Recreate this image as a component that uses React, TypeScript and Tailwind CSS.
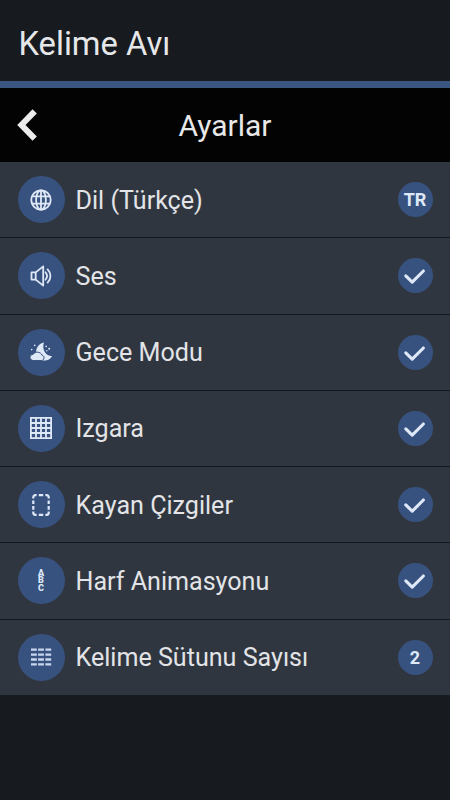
import type { ReactNode } from 'react';

const ICON_COLOR = '#dfe8f7';

function GlobeIcon() {
  return (
    <svg width="24" height="24" viewBox="0 0 24 24" fill="none" stroke={ICON_COLOR} strokeWidth="1.8">
      <circle cx="12" cy="12" r="9.7" />
      <ellipse cx="12" cy="12" rx="4.9" ry="9.7" />
      <path d="M12 2v20M3 8.4h18M3 15.6h18" />
    </svg>
  );
}

function SoundIcon() {
  return (
    <svg width="24" height="24" viewBox="0 0 24 24" fill="none" stroke={ICON_COLOR} strokeWidth="1.8" strokeLinejoin="round">
      <path d="M2.5 8.4h4.2v7.2H2.5z" />
      <path d="M6.7 8.4L14.2 2.4v19.2l-7.5-6" />
      <path d="M16.5 8.2c1.8 2.2 1.8 5.4 0 7.6M18.6 5.4c3.8 3.8 3.8 9.4 0 13.2" strokeLinecap="round" />
    </svg>
  );
}

function NightIcon() {
  return (
    <svg width="24" height="24" viewBox="0 0 24 24" fill={ICON_COLOR}>
      <path d="M14.9 2.6C10 3.6 7.2 7.6 7.2 12c0 5 3.8 8.6 8.3 8.6 3.3 0 6.2-1.700 7.600-4.400-6.400 0-10.400-6.400-8.200-13.600z" />
      <path
        d="M5 20.600c-5.200 0-5.200-6-.8-6.300 1.700-3.200 7.600-2.700 8.700.8 3.300.6 2.600 5.500-.7 5.500z"
        stroke="#38527f"
        strokeWidth="1"
      />
      <circle cx="5.700" cy="5.400" r=".8" />
      <circle cx="2.700" cy="9.600" r=".8" />
      <circle cx="17.200" cy="6.400" r=".8" />
      <circle cx="20.200" cy="8.800" r="1" />
      <circle cx="17.800" cy="10.800" r=".7" />
    </svg>
  );
}

function GridIcon() {
  return (
    <svg width="24" height="24" viewBox="0 0 24 24" fill="none" stroke={ICON_COLOR} strokeWidth="1.8">
      <path d="M1.9 1.9h20.2v20.2H1.9zM7 1.9v20.2M12 1.9v20.2M17 1.9v20.2M1.9 7h20.2M1.9 12h20.2M1.9 17h20.2" />
    </svg>
  );
}

function DashedIcon() {
  return (
    <svg width="24" height="24" viewBox="0 0 24 24" fill="none" stroke={ICON_COLOR} strokeWidth="2.2">
      <path d="M4.3 5.4V4.2a2 2 0 0 1 2-2h1.3M16.4 2.2h1.3a2 2 0 0 1 2 2v1.2M19.7 18.6v1.2a2 2 0 0 1-2 2h-1.3M7.6 21.8H6.3a2 2 0 0 1-2-2v-1.2" />
      <path d="M9.8 2.2h4.4M9.8 21.8h4.4M4.3 7.4v3.7M4.3 13v3.7M19.7 7.4v3.7M19.7 13v3.7" />
    </svg>
  );
}

function LettersIcon() {
  return (
    <div className="flex flex-col items-center text-[9px] leading-[7.4px] font-black text-[#dfe8f7]">
      <span>A</span>
      <span>B</span>
      <span>C</span>
    </div>
  );
}

function ColumnsIcon() {
  return (
    <svg width="24" height="24" viewBox="0 0 24 24" fill="none" stroke="#c9d7ee" strokeWidth="2.3">
      {[4.7, 9.6, 14.5, 19.4].map((y) => (
        <path key={y} d={`M2 ${y}h5.8M9.1 ${y}h5.8M16.4 ${y}h5.8`} />
      ))}
    </svg>
  );
}

function CheckIcon() {
  return (
    <svg width="24" height="24" viewBox="0 0 24 24" fill="none" stroke={ICON_COLOR} strokeWidth="3.1" strokeLinecap="round" strokeLinejoin="round">
      <path d="M2.8 11.9l6.4 6.3L20.4 7" />
    </svg>
  );
}

interface Setting {
  label: string;
  icon: ReactNode;
  value: ReactNode;
}

const SETTINGS: Setting[] = [
  { label: 'Dil (Türkçe)', icon: <GlobeIcon />, value: 'TR' },
  { label: 'Ses', icon: <SoundIcon />, value: <CheckIcon /> },
  { label: 'Gece Modu', icon: <NightIcon />, value: <CheckIcon /> },
  { label: 'Izgara', icon: <GridIcon />, value: <CheckIcon /> },
  { label: 'Kayan Çizgiler', icon: <DashedIcon />, value: <CheckIcon /> },
  { label: 'Harf Animasyonu', icon: <LettersIcon />, value: <CheckIcon /> },
  { label: 'Kelime Sütunu Sayısı', icon: <ColumnsIcon />, value: '2' },
];

function SettingRow({ label, icon, value }: Setting) {
  return (
    <li className="flex h-[76.25px] items-center border-b border-[#13171c] bg-[#30363f] pl-[17.5px] pr-[17.5px] last:h-[75.5px] last:border-b-0">
      <div className="flex size-[47px] shrink-0 items-center justify-center rounded-full bg-[#38527f]">{icon}</div>
      <span className="ml-[11px] flex-1 whitespace-nowrap pt-px text-[25.1px] leading-none text-[#e2e4e7]">{label}</span>
      <div className="flex size-[35px] shrink-0 items-center justify-center rounded-full bg-[#38527f] pt-px text-lg leading-none font-bold text-[#dfe8f7]">
        {value}
      </div>
    </li>
  );
}

export default function App() {
  return (
    <div className="h-[800px] w-[450px] overflow-hidden bg-[#171a1f] font-['Roboto',sans-serif]">
      <header className="flex h-[88px] items-center border-b-[7px] border-[#3b5680] pl-[18.5px] pt-[7px]">
        <h1 className="text-[32.7px] leading-none text-[#e6e7e9]">Kelime Avı</h1>
      </header>
      <nav className="grid h-[74px] grid-cols-[60px_1fr_60px] items-center bg-[#030303]">
        <button className="pl-4" aria-label="Geri">
          <svg width="22" height="34" viewBox="0 0 22 34" fill="none" stroke="#ececec" strokeWidth="6">
            <path d="M18.7 3.3L5.4 17l13.3 13.7" />
          </svg>
        </button>
        <h2 className="pt-[2px] text-center text-[30px] leading-none text-[#e8e8e8]">Ayarlar</h2>
      </nav>
      <ul>
        {SETTINGS.map((setting) => (
          <SettingRow key={setting.label} {...setting} />
        ))}
      </ul>
    </div>
  );
}
